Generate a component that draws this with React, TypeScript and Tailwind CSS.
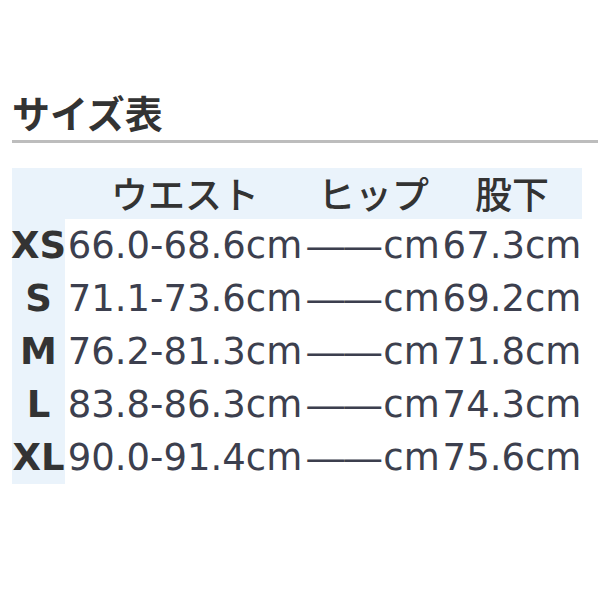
import React from "react";

const rows = [
  { s: "XS", w: "66.0-68.6cm", i: "67.3cm" },
  { s: "S", w: "71.1-73.6cm", i: "69.2cm" },
  { s: "M", w: "76.2-81.3cm", i: "71.8cm" },
  { s: "L", w: "83.8-86.3cm", i: "74.3cm" },
  { s: "XL", w: "90.0-91.4cm", i: "75.6cm" },
];

const font = { fontFamily: '"DejaVu Sans", "Noto Sans CJK JP", sans-serif' };
const cjk = { fontFamily: '"Noto Sans CJK JP", sans-serif' };
const dash = { fontFamily: '"Liberation Sans", sans-serif' };

export default function App() {
  return (
    <div className="w-[600px] h-[600px] bg-white overflow-hidden" style={font}>
      <div className="pt-[93px] pl-[12px] text-[38px] leading-none font-bold text-[#333333]" style={cjk}>
        サイズ表
      </div>
      <div className="ml-[12px] mt-[9px] w-[586px] h-[3px] bg-[#bdbdbd]" />
      <div className="ml-[12px] mt-[25px] w-[570px] text-[37px] leading-none">
        <div className="grid grid-cols-[53px_240px_137px_140px] h-[51px] bg-[#eaf3fb] text-[#333333] font-medium" style={cjk}>
          <div />
          <div className="flex items-center justify-center">ウエスト</div>
          <div className="flex items-center justify-center">ヒップ</div>
          <div className="flex items-center justify-center">股下</div>
        </div>
        {rows.map((r) => (
          <div key={r.s} className="grid grid-cols-[53px_240px_137px_140px] h-[53px]">
            <div className="flex items-center justify-center bg-[#eaf3fb] font-bold text-[#333333] whitespace-nowrap">{r.s}</div>
            <div className="flex items-center justify-center text-[#3c3f4e] whitespace-nowrap">{r.w}</div>
            <div className="flex items-center justify-center text-[#3c3f4e] whitespace-nowrap">
              <span style={dash}>——</span>
              <span className="ml-[2px]">cm</span>
            </div>
            <div className="flex items-center justify-center text-[#3c3f4e] whitespace-nowrap">{r.i}</div>
          </div>
        ))}
      </div>
    </div>
  );
}
